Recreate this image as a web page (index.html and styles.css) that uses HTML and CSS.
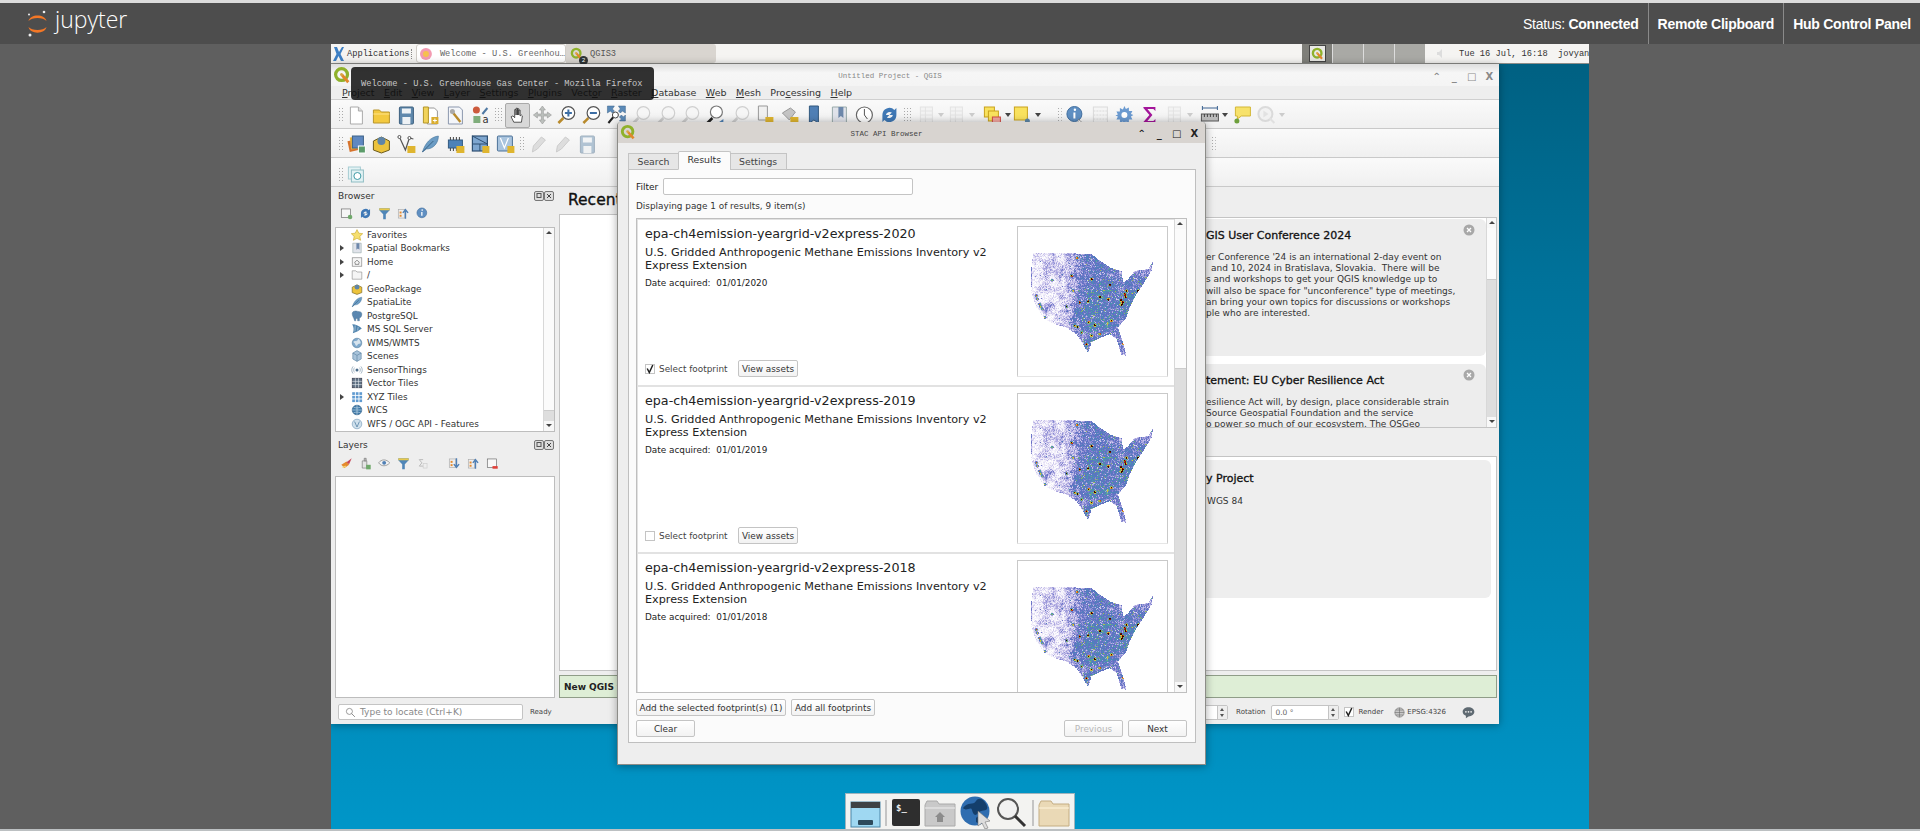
FILE: index.html
```html
<!DOCTYPE html>
<html lang="en">
<head>
  <meta charset="UTF-8" />
  <title>QGIS3 - Jupyter Remote Desktop</title>
  <link rel="stylesheet" href="styles.css">
</head>
<body>

  <!-- shared icons -->
  <svg class="defs" xmlns="http://www.w3.org/2000/svg">
    <symbol id="qgis" viewBox="0 0 20 20"><circle cx="9.5" cy="9.5" r="6.6" fill="none" stroke="#8fb12b" stroke-width="3.6"/><path d="M10 10l7 8" stroke="#e2862b" stroke-width="3.2"/><circle cx="9.5" cy="9.5" r="1.7" fill="#d9a441"/></symbol>
    <symbol id="new" viewBox="0 0 20 20"><path d="M4 2h8l4 4v13H4z" fill="#fff" stroke="#aaa"/><path d="M12 2v4h4" fill="#ddd" stroke="#aaa"/></symbol>
    <symbol id="open" viewBox="0 0 20 20"><path d="M2 5h6l2 2h8v11H2z" fill="#f3c93f" stroke="#b8952c"/><path d="M2 9h16" stroke="#ffe38a"/></symbol>
    <symbol id="save" viewBox="0 0 20 20"><rect x="3" y="2" width="14" height="17" rx="1" fill="#5f88ac" stroke="#3d607f"/><rect x="5.5" y="3.5" width="9" height="5" fill="#eef2f5"/><rect x="6" y="12" width="8" height="7" fill="#eef2f5"/></symbol>
    <symbol id="layout" viewBox="0 0 20 20"><path d="M7 3h7l3 3v13H7z" fill="#fff" stroke="#999"/><path d="M3 2h5v16H3z" fill="#f1d35a" stroke="#b39528"/><rect x="11" y="12" width="7" height="7" fill="#d9ad2e"/><path d="M14.500 13.500v4M12.500 15.500h4" stroke="#fff"/></symbol>
    <symbol id="manager" viewBox="0 0 20 20"><path d="M3 2h11l3 3v14H3z" fill="#f4f6fa" stroke="#8b97ad"/><path d="M7 7l8 10" stroke="#b88a2b" stroke-width="2.400"/><circle cx="7" cy="6.500" r="2.500" fill="#aaa"/></symbol>
    <symbol id="style" viewBox="0 0 20 20"><circle cx="6" cy="5" r="3.500" fill="#cc5a3c"/><rect x="3" y="11" width="7" height="7" fill="#7fad7b"/><path d="M12 9l5-6" stroke="#4f79a3" stroke-width="2"/><text x="12" y="18" font-size="10" font-family="DejaVu Sans" fill="#333">a</text></symbol>
    <symbol id="hand" viewBox="0 0 20 20"><path d="M6 18l-3-6 2-1 2 2V4h1.500v6V2.500H10V10V3h1.500v7V4.500H13V11l1.500-1 1 1-1 7z" fill="#fff" stroke="#333" stroke-width=".9"/></symbol>
    <symbol id="pan" viewBox="0 0 20 20"><path d="M10 1l3 4h-2v4h4V7l4 3-4 3v-2h-4v4h2l-3 4-3-4h2v-4H5v2l-4-3 4-3v2h4V5H7z" fill="#bcc0bd" stroke="#999" stroke-width=".6"/></symbol>
    <symbol id="zin" viewBox="0 0 20 20"><path d="M7 13l-5 5" stroke="#b88a2b" stroke-width="2.500"/><circle cx="12" cy="8" r="6.300" fill="#fff" stroke="#555" stroke-width="1.200"/><path d="M12 4.500v7M8.500 8h7" stroke="#3d6ea5" stroke-width="2"/></symbol>
    <symbol id="zout" viewBox="0 0 20 20"><path d="M7 13l-5 5" stroke="#b88a2b" stroke-width="2.500"/><circle cx="12" cy="8" r="6.300" fill="#fff" stroke="#555" stroke-width="1.200"/><path d="M8.500 8h7" stroke="#3d6ea5" stroke-width="2"/></symbol>
    <symbol id="zfull" viewBox="0 0 20 20"><path d="M1 1h7l-2 3 2 2-2 2-2-2-3 2zM19 1h-7l2 3-2 2 2 2 2-2 3 2zM19 16h-6l2-2-2-2 2-2 2 2 2-2z" fill="#5b8ab8" stroke="#3d6288" stroke-width=".5"/><path d="M7 12l-5 6" stroke="#222" stroke-width="2"/><circle cx="9" cy="10" r="3" fill="#fff" stroke="#444"/></symbol>
    <symbol id="mag" viewBox="0 0 20 20"><path d="M7 13l-5 5" stroke="#ccc" stroke-width="2.500"/><circle cx="12" cy="8" r="6.300" fill="#f6f6f6" stroke="#d0d0d0" stroke-width="1.200"/></symbol>
    <symbol id="magb" viewBox="0 0 20 20"><path d="M7 13l-5 5" stroke="#222" stroke-width="2.500"/><circle cx="11" cy="7" r="6" fill="#fff" stroke="#777" stroke-width="1.200"/><path d="M11 19l7-5v8z" fill="#4d7fb3"/></symbol>
    <symbol id="pagestar" viewBox="0 0 20 20"><path d="M3 1h9v14H3z" fill="#f0f0f0" stroke="#999"/><rect x="10" y="12" width="8" height="7" fill="#dfb52f"/></symbol>
    <symbol id="mapstar" viewBox="0 0 20 20"><path d="M2 8l8-5 5 4-6 8z" fill="#c4c4c4" stroke="#999"/><rect x="10" y="12" width="8" height="7" fill="#dfb52f"/></symbol>
    <symbol id="bookm" viewBox="0 0 20 20"><path d="M5 1h9v17l-4.500-3L5 18z" fill="#4f7fb5" stroke="#33597f"/></symbol>
    <symbol id="bookg" viewBox="0 0 20 20"><path d="M3 2h14v16H3z" fill="#e0e3ea" stroke="#9aa"/><path d="M9 2h5v11l-2.500-2L9 13z" fill="#6d88ab"/></symbol>
    <symbol id="clock" viewBox="0 0 20 20"><circle cx="10" cy="10" r="8" fill="#fff" stroke="#666" stroke-width="1.200"/><path d="M10 4v6l3 4" fill="none" stroke="#555"/></symbol>
    <symbol id="refresh" viewBox="0 0 20 20"><path d="M3 10a7 7 0 0 1 12-5l2-2v7h-7l2.500-2.500A4 4 0 0 0 6.500 10zM17 10a7 7 0 0 1-12 5l-2 2v-7h7l-2.500 2.500A4 4 0 0 0 13.500 10z" fill="#3f78b5"/></symbol>
    <symbol id="yelw" viewBox="0 0 20 20"><rect x="2" y="2" width="10" height="10" fill="#f9e25e" stroke="#c9a21d"/><rect x="6" y="6" width="10" height="10" fill="#f9e25e" stroke="#c9a21d"/><rect x="10" y="12" width="8" height="7" fill="#f2a6a0" stroke="#d24b42"/></symbol>
    <symbol id="yelp" viewBox="0 0 20 20"><rect x="2" y="2" width="13" height="13" fill="#f9e25e" stroke="#c9a21d"/><circle cx="15" cy="16" r="2.500" fill="#5d87a8"/></symbol>
    <symbol id="info" viewBox="0 0 20 20"><circle cx="9" cy="9" r="7.500" fill="#5f8fc2" stroke="#426f9f"/><path d="M9 7.500v6" stroke="#fff" stroke-width="2"/><circle cx="9.500" cy="4.800" r="1.200" fill="#fff"/></symbol>
    <symbol id="abacus" viewBox="0 0 20 20"><rect x="3" y="2" width="14" height="16" fill="#f3f3f3" stroke="#bbb"/><path d="M3 6h14M3 10h14M3 14h14" stroke="#bbb" stroke-dasharray="2 1"/></symbol>
    <symbol id="gear" viewBox="0 0 20 20"><path d="M10 1l1.500 3 3-1.500 0 3.500 3.500 0-1.500 3 2.500 1-2.500 1.500 1.500 3-3.500 0 0 3.500-3-1.500-1.500 2.500-1.500-2.500-3 1.500 0-3.500-3.500 0 1.500-3L1 10.500 3.500 9.500 2 6.500l3.500 0 0-3.500 3 1.500z" fill="#6b9ad0"/><circle cx="10" cy="10" r="3" fill="#fff"/></symbol>
    <symbol id="sigma" viewBox="0 0 20 20"><path d="M4 2h12v4l-2-2H8l5 6-5 6h6l2-2v4H4v-1l6-7-6-7z" fill="#a3159a"/></symbol>
    <symbol id="table" viewBox="0 0 20 20"><rect x="4" y="2" width="12" height="16" fill="#f0f0f0" stroke="#ccc"/><path d="M4 6h12M4 10h12M4 14h12M9 2v16" stroke="#ccc"/></symbol>
    <symbol id="ruler" viewBox="0 0 20 20"><path d="M3 3h15M3 1v4M18 1v4" stroke="#3c6391"/><rect x="2" y="9" width="17" height="7" fill="#bbb" stroke="#555"/><path d="M5 9v3M8 9v3M11 9v3M14 9v3M17 9v3" stroke="#444"/></symbol>
    <symbol id="bubble" viewBox="0 0 20 20"><path d="M3 2h15v9H9l-4 3v-3H3z" fill="#f7e26b" stroke="#d3b737"/><circle cx="4.500" cy="16" r="2.500" fill="#6ea03c"/></symbol>
    <symbol id="cog2" viewBox="0 0 20 20"><circle cx="9" cy="9" r="7" fill="#eee" stroke="#bbb" stroke-width="2"/><path d="M7 5.500l5 3.500-5 3.500z" fill="#ccc"/><path d="M13 13l5 5" stroke="#ccc" stroke-width="2"/></symbol>
    <symbol id="addlayer" viewBox="0 0 20 20"><rect x="2" y="6" width="11" height="11" fill="#d6732d" transform="rotate(-12 7 11)"/><rect x="4" y="3" width="11" height="12" fill="#e8b23c" transform="rotate(-6 9 9)"/><rect x="6" y="2" width="11" height="12" fill="#5f88c0" stroke="#3d6288"/><rect x="12" y="12" width="7" height="7" fill="#5c9c6a" stroke="#fff"/></symbol>
    <symbol id="gpkg" viewBox="0 0 20 20"><path d="M2 7l8-4 8 4v9l-8 3-8-3z" fill="#ecc33c" stroke="#6b5a1b"/><circle cx="10" cy="7" r="4" fill="#5f85a8"/></symbol>
    <symbol id="vertex" viewBox="0 0 20 20"><path d="M3 3l6 13 4-12 4 1" fill="none" stroke="#555" stroke-width="1.200"/><circle cx="3" cy="3" r="1.500" fill="#fff" stroke="#555"/><circle cx="13" cy="4" r="1.500" fill="#fff" stroke="#555"/><rect x="11" y="12" width="8" height="7" fill="#dfb52f"/></symbol>
    <symbol id="feather" viewBox="0 0 20 20"><path d="M2 18C5 9 10 3 18 2c0 7-5 13-12 13z" fill="#6b9cc4" stroke="#44739b" stroke-width=".6"/><path d="M2 18L13 7" stroke="#3b6487"/></symbol>
    <symbol id="chip" viewBox="0 0 20 20"><rect x="3" y="6" width="14" height="8" fill="#4d82b8" stroke="#325a80"/><path d="M5 3v3M8 3v3M11 3v3M14 3v3M5 14v3M8 14v3M11 14v3M14 14v3" stroke="#444"/><rect x="11" y="12" width="8" height="7" fill="#dfb52f"/></symbol>
    <symbol id="gridmesh" viewBox="0 0 20 20"><rect x="2" y="2" width="15" height="15" fill="#7ea6cf" stroke="#2d4f72" stroke-width="1.200"/><path d="M2 10h15M9.500 10v7M2 2l15 8" stroke="#2d4f72"/><rect x="12" y="12" width="7" height="7" fill="#dfb52f"/></symbol>
    <symbol id="vmesh" viewBox="0 0 20 20"><rect x="2" y="2" width="15" height="15" rx="1" fill="#a9c4de" stroke="#4b7197"/><path d="M5 4l4 10 4-10" fill="none" stroke="#fff" stroke-width="1.200"/><rect x="12" y="12" width="7" height="7" fill="#dfb52f"/></symbol>
    <symbol id="pen" viewBox="0 0 20 20"><path d="M4 18l1-6 8-9 4 3-8 9z" fill="#ddd" stroke="#ccc"/></symbol>
    <symbol id="help" viewBox="0 0 20 20"><rect x="3" y="1" width="14" height="18" fill="#5b8ab8" stroke="#3d6288"/><text x="10" y="14" text-anchor="middle" font-size="11" font-family="DejaVu Sans" fill="#fff">?</text></symbol>
    <symbol id="stack" viewBox="0 0 20 20"><rect x="2" y="2" width="12" height="12" fill="#e3f2f4" stroke="#a7cdd3"/><rect x="5" y="5" width="12" height="12" fill="#e3f2f4" stroke="#8fbdc4"/><circle cx="11" cy="11" r="3.500" fill="#fff" stroke="#3e9aa5"/></symbol>
    <symbol id="star" viewBox="0 0 20 20"><path d="M10 1l3 6 6.500.8-4.800 4.500 1.300 6.500L10 15.500 4 18.800l1.300-6.500L.5 7.800 7 7z" fill="#f6df6f" stroke="#c9a829"/></symbol>
    <symbol id="home" viewBox="0 0 20 20"><rect x="2" y="3" width="16" height="14" fill="#f5f5f5" stroke="#777"/><path d="M5.500 11L10 7l4.500 4M7 11v3h6v-3" fill="none" stroke="#555"/></symbol>
    <symbol id="dir" viewBox="0 0 20 20"><path d="M2 3h6l2 2h8v12H2z" fill="#f5f5f5" stroke="#888"/></symbol>
    <symbol id="elephant" viewBox="0 0 20 20"><path d="M2 6c0-4 5-5 8-4s8 0 8 5-3 6-4 6v5h-3v-4H8v4H6c-1-5-4-7-4-12z" fill="#5a87b0" stroke="#335e85" stroke-width=".6"/></symbol>
    <symbol id="fan" viewBox="0 0 20 20"><path d="M2 2c6 0 12 3 16 7-4 3-9 6-15 8 2-5 2-10-1-15z" fill="#4f83ad"/><path d="M7 4l-.5 10M12 6.500l-1 6" stroke="#cfe0ec"/></symbol>
    <symbol id="globe" viewBox="0 0 20 20"><circle cx="10" cy="10" r="8" fill="#7fa9cc" stroke="#577f9f"/><path d="M4 8c3-3 5 1 7-3s4 1 5 4-4 1-5 4-4 1-4-1-3-2-3-4z" fill="#d7e4ee"/></symbol>
    <symbol id="cube" viewBox="0 0 20 20"><path d="M10 1l7 4v10l-7 4-7-4V5z" fill="#a8c3da" stroke="#587f9f"/><path d="M3 5l7 4 7-4M10 9v10" fill="none" stroke="#587f9f"/></symbol>
    <symbol id="sensor" viewBox="0 0 20 20"><circle cx="10" cy="10" r="2.500" fill="#4a6d8c"/><path d="M6 6c-2 2-2 6 0 8M14 6c2 2 2 6 0 8M3.500 4c-3 3-3 9 0 12M16.500 4c3 3 3 9 0 12" fill="none" stroke="#8aa0b4" stroke-width="1.200"/></symbol>
    <symbol id="griddark" viewBox="0 0 20 20"><rect x="2" y="2" width="16" height="16" fill="#5c6f82" stroke="#334"/><path d="M7.300 2v16M12.600 2v16M2 7.300h16M2 12.600h16" stroke="#e8edf2"/></symbol>
    <symbol id="gridblue" viewBox="0 0 20 20"><g fill="#5f9ad0"><rect x="2" y="2" width="4.500" height="4.500"/><rect x="8" y="2" width="4.500" height="4.500"/><rect x="14" y="2" width="4.500" height="4.500"/><rect x="2" y="8" width="4.500" height="4.500"/><rect x="8" y="8" width="4.500" height="4.500"/><rect x="14" y="8" width="4.500" height="4.500"/><rect x="2" y="14" width="4.500" height="4.500"/><rect x="8" y="14" width="4.500" height="4.500"/><rect x="14" y="14" width="4.500" height="4.500"/></g></symbol>
    <symbol id="wcs" viewBox="0 0 20 20"><circle cx="10" cy="10" r="8" fill="#3f79a8" stroke="#28587f"/><path d="M2 10h16M10 2v16M4 5c4 2 8 2 12 0M4 15c4-2 8-2 12 0" fill="none" stroke="#cfe0ec"/></symbol>
    <symbol id="wfs" viewBox="0 0 20 20"><circle cx="10" cy="10" r="8" fill="#cfe0ec" stroke="#6f96b5"/><path d="M6 6l4 9 4-9" fill="none" stroke="#5a85a8" stroke-width="1.400"/></symbol>
    <symbol id="newdb" viewBox="0 0 20 20"><rect x="2" y="3" width="14" height="13" fill="#f6f6f6" stroke="#666"/><circle cx="15.500" cy="15.500" r="3.500" fill="#6fa86a"/></symbol>
    <symbol id="funnel" viewBox="0 0 20 20"><path d="M2 2h16v3l-6 6v8H8v-8L2 5z" fill="#4f86b8"/><path d="M2 2h16v3H2z" fill="#e8c94c"/></symbol>
    <symbol id="collapse" viewBox="0 0 20 20"><rect x="2" y="4" width="10" height="13" fill="#eee" stroke="#aaa"/><path d="M13 18V6M9 9l4-5 4 5" fill="none" stroke="#4f7fb5" stroke-width="2.200"/><rect x="4" y="7" width="3" height="3" fill="#e58a2e"/><rect x="4" y="12" width="3" height="3" fill="#e58a2e"/></symbol>
    <symbol id="expand" viewBox="0 0 20 20"><rect x="2" y="3" width="10" height="13" fill="#eee" stroke="#aaa"/><path d="M13 2v12M9 11l4 5 4-5" fill="none" stroke="#4f7fb5" stroke-width="2.200"/><rect x="4" y="6" width="3" height="3" fill="#e58a2e"/><rect x="4" y="11" width="3" height="3" fill="#e58a2e"/></symbol>
    <symbol id="brush" viewBox="0 0 20 20"><path d="M2 12l8-5 4 5-7 5z" fill="#e58a2e"/><path d="M10 8l8-6-4 9z" fill="#c7485a"/><path d="M4 16l5-2" stroke="#f2d36a" stroke-width="2"/></symbol>
    <symbol id="addgroup" viewBox="0 0 20 20"><path d="M5 6h7v11H5z" fill="#e4e4e4" stroke="#777"/><path d="M8 2h3v4H8z" fill="#bbb" stroke="#777"/><rect x="11" y="12" width="7" height="7" fill="#6fa86a"/></symbol>
    <symbol id="eye" viewBox="0 0 20 20"><path d="M1 9c4-6 12-6 17 0-5 6-13 6-17 0z" fill="#f3f3f3" stroke="#777"/><circle cx="9.500" cy="9" r="3" fill="#4f7fb5"/></symbol>
    <symbol id="fx" viewBox="0 0 20 20"><path d="M11 4H5l4 5-4 5h6" fill="none" stroke="#bbb" stroke-width="1.500"/><rect x="11" y="10" width="6" height="7" fill="none" stroke="#ccc"/></symbol>
    <symbol id="rmlayer" viewBox="0 0 20 20"><rect x="2" y="3" width="14" height="13" fill="#f8f8f8" stroke="#666"/><rect x="10" y="14" width="8" height="4" fill="#e0403a"/></symbol>
    <symbol id="search" viewBox="0 0 20 20"><circle cx="8" cy="8" r="5.500" fill="none" stroke="#777" stroke-width="1.300"/><path d="M12 12l6 6" stroke="#777" stroke-width="1.500"/></symbol>
    <symbol id="crs" viewBox="0 0 20 20"><circle cx="10" cy="10" r="8.500" fill="#c8c8c8" stroke="#666"/><path d="M1.500 10h17M10 1.500v17M3 5.500h14M3 14.500h14" stroke="#666"/></symbol>
    <symbol id="msg" viewBox="0 0 20 20"><path d="M10 2c5 0 9 3 9 7s-4 7-9 7l-4 3v-4c-3-1-5-3-5-6 0-4 4-7 9-7z" fill="#5f6a72"/><circle cx="6" cy="9" r="1.300" fill="#eee"/><circle cx="10" cy="9" r="1.300" fill="#eee"/><circle cx="14" cy="9" r="1.300" fill="#eee"/></symbol>
    <symbol id="tick" viewBox="0 0 10 10"><path d="M2.200 4.500L4.300 8.500 7.800 1" fill="none" stroke="#222" stroke-width="1.500"/></symbol>
    <symbol id="float" viewBox="0 0 10 10"><rect x=".5" y=".5" width="9" height="9" rx="1.500" fill="#ddd" stroke="#777"/><rect x="3" y="2.500" width="4" height="4" fill="none" stroke="#555"/></symbol>
    <symbol id="closex" viewBox="0 0 10 10"><rect x=".5" y=".5" width="9" height="9" rx="1.500" fill="#ddd" stroke="#777"/><path d="M3 3l4 4M7 3L3 7" stroke="#444"/></symbol>
    <symbol id="circlex" viewBox="0 0 12 12"><circle cx="6" cy="6" r="5.500" fill="#a8a8a8"/><path d="M4 4l4 4M8 4L4 8" stroke="#fff" stroke-width="1.300"/></symbol>
  </svg>

  <!-- jupyter bar -->
  <header class="hub-bar">
    <div class="hub-logo">
      <svg width="22" height="27" viewBox="0 0 22 27">
        <path d="M1.500 11C3 3.500 18 3.500 19.500 11 16 7 5 7 1.500 11z" fill="#f37726"/>
        <path d="M1.500 17C3 24.500 18 24.500 19.500 17 16 21 5 21 1.500 17z" fill="#f37726"/>
        <circle cx="17" cy="2" r="1.300" fill="#eee"/><circle cx="2" cy="4.500" r="1" fill="#eee"/><circle cx="3" cy="25" r="1.500" fill="#eee"/>
      </svg>
      <span>jupyter</span>
    </div>
    <nav class="hub-nav">
      <div class="hub-item">Status:&nbsp;<b>Connected</b></div>
      <div class="hub-item"><b>Remote Clipboard</b></div>
      <div class="hub-item"><b>Hub Control Panel</b></div>
    </nav>
  </header>

  <main class="stage">
    <div class="desktop">

      <!-- xfce panel -->
      <div class="panel">
        <div class="apps">
          <svg width="11" height="16" viewBox="0 0 11 16"><path d="M1 1l3 0 2 5 3-5 2 0-3.500 7L11 15H8L5.500 10 3 15H0l3.500-7z" fill="#3d7fc4"/></svg>
          <span>Applications</span>
        </div>
        <div class="panel-sep"></div>
        <div class="task task-on">
          <svg width="14" height="14" viewBox="0 0 14 14"><circle cx="7" cy="7" r="6" fill="#f39bb2"/><circle cx="7" cy="7" r="3" fill="#f5c14e"/></svg>
          <span>Welcome - U.S. Greenhou…</span>
        </div>
        <div class="task task-group">
          <span class="task-ic"><svg width="13" height="13"><use href="#qgis"/></svg><i class="task-badge">2</i></span>
          <span>QGIS3</span>
        </div>
        <div class="pager">
          <div class="pager-cell pager-on"><span class="pager-win"><svg width="13" height="13"><use href="#qgis"/></svg></span></div>
          <div class="pager-cell"></div>
          <div class="pager-cell"></div>
          <div class="pager-cell"></div>
        </div>
        <svg class="vol" width="9" height="9" viewBox="0 0 9 9"><path d="M0 3h2l3-3v9L2 6H0z" fill="#ddd"/></svg>
        <div class="clock">Tue 16 Jul, 16:18&nbsp; jovyan</div>
      </div>

      <div class="tooltip">Welcome - U.S. Greenhouse Gas Center - Mozilla Firefox</div>

      <!-- qgis main window -->
      <section class="win qgis">
        <div class="win-title">
          <svg class="win-logo" width="18" height="18"><use href="#qgis"/></svg>
          <span class="win-name">Untitled Project - QGIS</span>
          <div class="win-btns win-btns-soft"><span>⌃</span><span>_</span><span>□</span><span>X</span></div>
        </div>

        <div class="menu">
          <span><u>P</u>roject</span><span><u>E</u>dit</span><span><u>V</u>iew</span><span><u>L</u>ayer</span><span><u>S</u>ettings</span><span><u>P</u>lugins</span><span>Vect<u>o</u>r</span><span><u>R</u>aster</span><span><u>D</u>atabase</span><span><u>W</u>eb</span><span><u>M</u>esh</span><span>Pro<u>c</u>essing</span><span><u>H</u>elp</span>
        </div>

        <div class="tb">
          <i class="grip"></i>
          <svg class="ic"><use href="#new"/></svg><svg class="ic"><use href="#open"/></svg><svg class="ic"><use href="#save"/></svg><svg class="ic"><use href="#layout"/></svg><svg class="ic"><use href="#manager"/></svg><svg class="ic"><use href="#style"/></svg>
          <i class="grip grip-w"></i>
          <span class="ic-on"><svg class="ic"><use href="#hand"/></svg></span><svg class="ic"><use href="#pan"/></svg><svg class="ic"><use href="#zin"/></svg><svg class="ic"><use href="#zout"/></svg><svg class="ic"><use href="#zfull"/></svg>
          <svg class="ic"><use href="#mag"/></svg><svg class="ic"><use href="#mag"/></svg><svg class="ic"><use href="#mag"/></svg><svg class="ic"><use href="#magb"/></svg><svg class="ic"><use href="#mag"/></svg><svg class="ic"><use href="#pagestar"/></svg><svg class="ic"><use href="#mapstar"/></svg><svg class="ic"><use href="#bookm"/></svg><svg class="ic"><use href="#bookg"/></svg><svg class="ic"><use href="#clock"/></svg><svg class="ic"><use href="#refresh"/></svg>
          <i class="grip grip-w"></i>
          <svg class="ic ic-off"><use href="#table"/></svg><i class="dd dd-off dd-6"></i><svg class="ic ic-off"><use href="#table"/></svg><i class="dd dd-off dd-11"></i>
          <svg class="ic"><use href="#yelw"/></svg><i class="dd dd-5"></i><svg class="ic"><use href="#yelp"/></svg><i class="dd dd-11"></i><i class="grip grip-n"></i>
          <span class="ic-wrap"><svg class="ic"><use href="#info"/></svg><svg class="cursor" width="8" height="10" viewBox="0 0 8 10"><path d="M0 0v8l2-2 2 4 2-1-2-3h3z" fill="#fff" stroke="#666" stroke-width=".6"/></svg></span><svg class="ic ic-off"><use href="#abacus"/></svg><svg class="ic"><use href="#gear"/></svg><svg class="ic"><use href="#sigma"/></svg><svg class="ic ic-off"><use href="#table"/></svg><i class="dd dd-off dd-10"></i>
          <svg class="ic"><use href="#ruler"/></svg><i class="dd dd-8"></i><svg class="ic"><use href="#bubble"/></svg><svg class="ic ic-off"><use href="#cog2"/></svg><i class="dd dd-off dd-8"></i>
        </div>

        <div class="tb">
          <i class="grip"></i>
          <svg class="ic"><use href="#addlayer"/></svg><svg class="ic"><use href="#gpkg"/></svg><svg class="ic"><use href="#vertex"/></svg><svg class="ic"><use href="#feather"/></svg><svg class="ic"><use href="#chip"/></svg><svg class="ic"><use href="#gridmesh"/></svg><svg class="ic"><use href="#vmesh"/></svg>
          <i class="grip grip-s"></i>
          <svg class="ic"><use href="#pen"/></svg><svg class="ic"><use href="#pen"/></svg><svg class="ic ic-off"><use href="#save"/></svg>
          <svg class="ic ic-help"><use href="#help"/></svg>
          <i class="grip grip-n"></i>
        </div>

        <div class="tb tb-last">
          <i class="grip"></i>
          <svg class="ic"><use href="#stack"/></svg>
        </div>

        <div class="main">
          <aside class="docks">
            <div class="dock-head"><span>Browser</span><svg width="10" height="10"><use href="#float"/></svg><svg width="10" height="10"><use href="#closex"/></svg></div>
            <div class="dock-tools">
              <svg><use href="#newdb"/></svg><svg><use href="#refresh"/></svg><svg><use href="#funnel"/></svg><svg><use href="#collapse"/></svg><svg><use href="#info"/></svg>
            </div>
            <div class="tree">
              <ul class="tree-list">
                <li><i></i><svg><use href="#star"/></svg>Favorites</li>
                <li><i class="arrow"></i><svg><use href="#bookg"/></svg>Spatial Bookmarks</li>
                <li><i class="arrow"></i><svg><use href="#home"/></svg>Home</li>
                <li><i class="arrow"></i><svg><use href="#dir"/></svg>/</li>
                <li><i></i><svg><use href="#gpkg"/></svg>GeoPackage</li>
                <li><i></i><svg><use href="#feather"/></svg>SpatiaLite</li>
                <li><i></i><svg><use href="#elephant"/></svg>PostgreSQL</li>
                <li><i></i><svg><use href="#fan"/></svg>MS SQL Server</li>
                <li><i></i><svg><use href="#globe"/></svg>WMS/WMTS</li>
                <li><i></i><svg><use href="#cube"/></svg>Scenes</li>
                <li><i></i><svg><use href="#sensor"/></svg>SensorThings</li>
                <li><i></i><svg><use href="#griddark"/></svg>Vector Tiles</li>
                <li><i class="arrow"></i><svg><use href="#gridblue"/></svg>XYZ Tiles</li>
                <li><i></i><svg><use href="#wcs"/></svg>WCS</li>
                <li><i></i><svg><use href="#wfs"/></svg>WFS / OGC API - Features</li>
                <li><i></i><svg><use href="#cube"/></svg></li>
              </ul>
              <div class="sbar">
                <i class="sbar-up"></i><div class="sbar-thumb"></div><div class="sbar-rest"></div><i class="sbar-down"></i>
              </div>
            </div>
            <div class="splitter"></div>
            <div class="dock-head"><span>Layers</span><svg width="10" height="10"><use href="#float"/></svg><svg width="10" height="10"><use href="#closex"/></svg></div>
            <div class="dock-tools dock-tools-l">
              <svg><use href="#brush"/></svg><svg><use href="#addgroup"/></svg><svg><use href="#eye"/></svg><svg><use href="#funnel"/></svg><svg><use href="#fx"/></svg><i class="gapx"></i><svg><use href="#expand"/></svg><svg><use href="#collapse"/></svg><svg><use href="#rmlayer"/></svg>
            </div>
            <div class="layers"></div>
          </aside>

          <div class="center">
            <div class="welcome">
              <div class="recent">
                <h1>Recent Projects</h1>
                <div class="recent-list"></div>
              </div>
              <div class="side">
                <div class="news">
                  <div class="news-list">
                    <article class="news-card news-card-a">
                      <svg class="news-x" width="12" height="12"><use href="#circlex"/></svg>
                      <h3>GIS User Conference 2024</h3>
                      <p>er Conference '24 is an international 2-day event on</p>
                      <p class="in-1"> and 10, 2024 in Bratislava, Slovakia.&nbsp; There will be</p>
                      <p>s and workshops to get your QGIS knowledge up to</p>
                      <p>will also be space for "unconference" type of meetings,</p>
                      <p>an bring your own topics for discussions or workshops</p>
                      <p>ple who are interested.</p>
                    </article>
                    <article class="news-card">
                      <svg class="news-x" width="12" height="12"><use href="#circlex"/></svg>
                      <h3>tement: EU Cyber Resilience Act</h3>
                      <p>esilience Act will, by design, place considerable strain</p>
                      <p>Source Geospatial Foundation and the service</p>
                      <p>o power so much of our ecosystem. The OSGeo</p>
                    </article>
                  </div>
                  <div class="sbar news-sbar">
                    <i class="sbar-up"></i><div class="sbar-thumb news-thumb"></div><div class="sbar-rest"></div><i class="sbar-down"></i>
                  </div>
                </div>
                <div class="templates">
                  <div class="template-card">
                    <h3>y Project</h3>
                    <p>WGS 84</p>
                  </div>
                </div>
              </div>
            </div>
            <div class="banner"><b>New QGIS version available</b></div>
          </div>
        </div>

        <div class="status">
          <div class="locator"><svg width="11" height="11"><use href="#search"/></svg><span>Type to locate (Ctrl+K)</span></div>
          <span class="ready">Ready</span>
          <div class="status-right">
            <div class="spin spin-scale"><b></b><i></i></div>
            <span class="st-label st-rot">Rotation</span>
            <div class="spin spin-rot"><span>0.0 °</span><i></i></div>
            <span class="check"><svg width="10" height="10"><use href="#tick"/></svg></span>
            <span class="st-label st-render">Render</span>
            <svg class="st-crs" width="11" height="11"><use href="#crs"/></svg>
            <span class="st-label st-epsg">EPSG:4326</span>
            <svg class="st-msg" width="13" height="13"><use href="#msg"/></svg>
          </div>
        </div>
      </section>

      <!-- stac plugin dialog -->
      <section class="win stac">
        <div class="win-title stac-title">
          <svg class="win-logo" width="16" height="16"><use href="#qgis"/></svg>
          <span class="win-name">STAC API Browser</span>
          <div class="win-btns"><span>⌃</span><span>_</span><span>□</span><span>X</span></div>
        </div>
        <div class="stac-body">
          <div class="tabs">
            <div class="tab">Search</div>
            <div class="tab tab-on">Results</div>
            <div class="tab">Settings</div>
          </div>
          <div class="pane">
            <div class="filter"><label>Filter</label><div class="field"></div></div>
            <div class="count">Displaying page 1 of results, 9 item(s)</div>
            <div class="results">
              <div class="result-list">
                <div class="card">
                  <div class="card-text">
                    <h4>epa-ch4emission-yeargrid-v2express-2020</h4>
                    <p class="card-desc">U.S. Gridded Anthropogenic Methane Emissions Inventory v2 Express Extension</p>
                    <p class="card-date">Date acquired:&nbsp; 01/01/2020</p>
                    <div class="card-foot">
                      <span class="check"><svg width="10" height="10"><use href="#tick"/></svg></span>
                      <span class="foot-label">Select footprint</span>
                      <button class="btn btn-assets">View assets</button>
                    </div>
                  </div>
                  <div class="thumb"><canvas class="map" width="149" height="149"></canvas></div>
                </div>
                <div class="card">
                  <div class="card-text">
                    <h4>epa-ch4emission-yeargrid-v2express-2019</h4>
                    <p class="card-desc">U.S. Gridded Anthropogenic Methane Emissions Inventory v2 Express Extension</p>
                    <p class="card-date">Date acquired:&nbsp; 01/01/2019</p>
                    <div class="card-foot">
                      <span class="check"></span>
                      <span class="foot-label">Select footprint</span>
                      <button class="btn btn-assets">View assets</button>
                    </div>
                  </div>
                  <div class="thumb"><canvas class="map" width="149" height="149"></canvas></div>
                </div>
                <div class="card">
                  <div class="card-text">
                    <h4>epa-ch4emission-yeargrid-v2express-2018</h4>
                    <p class="card-desc">U.S. Gridded Anthropogenic Methane Emissions Inventory v2 Express Extension</p>
                    <p class="card-date">Date acquired:&nbsp; 01/01/2018</p>
                  </div>
                  <div class="thumb"><canvas class="map" width="149" height="149"></canvas></div>
                </div>
              </div>
              <div class="sbar results-sbar">
                <i class="sbar-up"></i><div class="sbar-thumb results-thumb"></div><div class="sbar-rest"></div><i class="sbar-down"></i>
              </div>
            </div>
            <div class="btn-row">
              <button class="btn btn-sel">Add the selected footprint(s) (1)</button>
              <button class="btn btn-all">Add all footprints</button>
            </div>
            <div class="btn-row">
              <button class="btn btn-wide">Clear</button>
              <button class="btn btn-wide btn-off btn-prev">Previous</button>
              <button class="btn btn-wide">Next</button>
            </div>
          </div>
        </div>
      </section>

      <!-- dock -->
      <div class="dock">
        <svg width="31" height="30" viewBox="0 0 31 30"><rect x="1" y="4" width="29" height="25" fill="#9fd8f2" stroke="#4a86a8"/><rect x="1" y="4" width="29" height="6" fill="#3f4245"/><rect x="8" y="22" width="15" height="5" rx="1" fill="#2d4a5c"/></svg>
        <i class="dock-sep"></i>
        <svg width="28" height="27" viewBox="0 0 28 27"><rect width="28" height="27" rx="2" fill="#2e2e2e"/><text x="4" y="12" font-family="DejaVu Sans Mono" font-size="9" font-weight="bold" fill="#eee">$_</text></svg>
        <svg width="32" height="28" viewBox="0 0 32 28"><path d="M1 6l2-4h10l2 3h16v22H1z" fill="#c9c9c9" stroke="#aaa"/><path d="M1 9h30" stroke="#eee"/><path d="M11 18l5-5 5 5h-2v5h-6v-5z" fill="#8c8c8c"/></svg>
        <svg width="32" height="33" viewBox="0 0 32 33"><circle cx="15" cy="15" r="14.500" fill="#2f6db0"/><path d="M3 12c5-7 10-2 13-7s9-1 11 5-6 3-9 7-5 1-6-3-6 2-9-2zM16 22c3-3 6-1 6 2s-4 4-6 2z" fill="#143e6b"/><path d="M18 15v15l4-3 3 6 3-1-3-6 5-1z" fill="#ddd" stroke="#777" stroke-width=".6"/></svg>
        <svg width="31" height="31" viewBox="0 0 31 31"><circle cx="12" cy="12" r="10" fill="#f1f1f1" stroke="#555" stroke-width="2"/><path d="M19 19l10 10" stroke="#333" stroke-width="3"/></svg>
        <i class="dock-sep"></i>
        <svg width="32" height="28" viewBox="0 0 32 28"><path d="M1 6l2-4h10l2 3h16v22H1z" fill="#ead9b6" stroke="#c4ad82"/><path d="M1 9h30" stroke="#fff5dc"/></svg>
      </div>
    </div>
  </main>

  <script src="map.js"></script>
</body>
</html>
```

FILE: styles.css
```css
* {
  box-sizing: border-box;
}

html, body {
  height: 100%;
}

body {
  margin: 0;
  display: flex;
  flex-direction: column;
  overflow: hidden;
  background-color: #5f5f5f;
  border-top: 3px solid #dcdcdc;
  border-bottom: 2px solid #bcc0c2;
  font-family: "DejaVu Sans", sans-serif;
  font-size: 9px;
  color: #222;
}

h1, h3, h4, p, ul {
  margin: 0;
  padding: 0;
}

.defs {
  display: none;
}

/* jupyter bar */
.hub-bar {
  height: 41px;
  flex: none;
  display: flex;
  align-items: center;
  justify-content: space-between;
  background-color: #4d4d4d;
  font-family: "Liberation Sans", Arial, sans-serif;
  color: #fff;
}

.hub-logo {
  display: flex;
  align-items: center;
  padding-left: 27px;
  gap: 6px;
  font-family: "Open Sans", sans-serif;
  font-weight: 300;
  font-size: 23px;
}

.hub-logo span {
  position: relative;
  top: -5px;
}

.hub-nav {
  display: flex;
  height: 100%;
  font-size: 14px;
  letter-spacing: -.25px;
}

.hub-item {
  display: flex;
  align-items: center;
  padding: 0 9px;
  border-left: 1px solid #8a8a8a;
  white-space: pre;
}

.hub-item:first-child {
  border-left: none;
}

.stage {
  flex: 1;
  display: flex;
  padding-left: 331px;
}

/* desktop */
.desktop {
  position: relative;
  width: 1258px;
  height: 785px;
  overflow: hidden;
  background: linear-gradient(#005f80, #00729a 30%, #0088b6 75%, #0096c8);
  filter: blur(.3px);
}

.panel {
  height: 20px;
  display: flex;
  align-items: center;
  background-color: #f5f4f2;
  border-bottom: 1px solid #8c8c88;
  font-family: "Liberation Mono", monospace;
  font-size: 8.7px;
  color: #333;
}

.apps {
  width: 80px;
  flex: none;
  display: flex;
  align-items: center;
  gap: 3px;
  padding-left: 2px;
}

.panel-sep {
  width: 5px;
  flex: none;
  height: 10px;
  border-left: 1px dotted #888;
}

.task {
  width: 150px;
  height: 19px;
  flex: none;
  display: flex;
  align-items: center;
  gap: 7px;
  padding-left: 2px;
  color: #666;
  white-space: nowrap;
}

.task-on {
  background-color: #fff;
  border: 1px solid #d0ccc6;
  border-radius: 3px;
}

.task-group {
  background-color: #d9d5d0;
  border-radius: 0 3px 3px 0;
  color: #555;
}

.task-ic {
  position: relative;
  display: flex;
  margin-left: 2px;
}

.task-badge {
  position: absolute;
  right: -5px;
  bottom: -5px;
  width: 9px;
  height: 9px;
  border-radius: 50%;
  background-color: #2e3436;
  color: #fff;
  font-style: normal;
  font-size: 6px;
  line-height: 9px;
  text-align: center;
}

.pager {
  display: flex;
  flex: none;
  height: 19px;
  margin-left: 586px;
  background-color: #a9a9a5;
}

.pager-cell {
  width: 31px;
  border-left: 1px solid #ddd;
  display: flex;
  align-items: center;
  justify-content: center;
}

.pager-cell:first-child {
  width: 30px;
  border-left: none;
}

.pager-on {
  background-color: #7f7f7a;
}

.pager-win {
  display: flex;
  align-items: center;
  justify-content: center;
  width: 17px;
  height: 17px;
  background-color: #e8e8e4;
  border: 1px solid #444;
}

.vol {
  flex: none;
  margin-left: 12px;
}

.clock {
  margin-left: 13px;
  white-space: nowrap;
}

.tooltip {
  position: absolute;
  left: 20px;
  top: 23px;
  z-index: 5;
  width: 303px;
  height: 33px;
  padding: 12px 0 0 10px;
  border-radius: 4px;
  background-color: rgba(14, 14, 14, .85);
  font-family: "Liberation Mono", monospace;
  font-size: 8.7px;
  color: #c8c8c8;
  white-space: nowrap;
}

/* windows */
.win {
  position: absolute;
  display: flex;
  flex-direction: column;
  background-color: #eeeeee;
  box-shadow: 0 1px 8px rgba(0, 0, 0, .35);
}

.qgis {
  left: 0;
  top: 20px;
  width: 1168px;
  height: 660px;
  z-index: 1;
}

.stac {
  left: 286px;
  top: 78px;
  width: 589px;
  height: 643px;
  z-index: 3;
  border: 1px solid #8c8c88;
  border-top: none;
  border-radius: 4px 4px 0 0;
}

.win-title {
  height: 22px;
  flex: none;
  position: relative;
  display: flex;
  align-items: center;
  justify-content: center;
  padding: 2px 50px 0 0;
  background: linear-gradient(#dedede, #f6f6f6 40%, #f4f4f4);
  font-family: "Liberation Mono", monospace;
  font-size: 7.5px;
  color: #888;
}

.stac-title {
  height: 21px;
  background: #d8d4d0;
  border-radius: 4px 4px 0 0;
  color: #444;
}

.win-logo {
  position: absolute;
  left: 2px;
  top: 2px;
}

.win-btns {
  position: absolute;
  right: 2px;
  top: 2px;
  bottom: 0;
  display: flex;
  align-items: center;
  font-family: "DejaVu Sans", sans-serif;
  font-size: 10px;
  font-weight: bold;
  color: #222;
}

.win-btns span {
  width: 17.5px;
  text-align: center;
}

.win-btns-soft {
  right: 1px;
  color: #8a8a8a;
}

.menu {
  height: 14px;
  flex: none;
  display: flex;
  align-items: center;
  padding-left: 11px;
  background-color: #eeeeee;
  border-bottom: 1px solid #cfcfcf;
  font-size: 9.5px;
  color: #333;
}

.menu span {
  padding-right: 9.4px;
}

.tb {
  height: 29px;
  flex: none;
  display: flex;
  align-items: center;
  padding: 2px 0 0 6px;
  background: linear-gradient(#fafafa, #f0f0f0);
  border-bottom: 1px solid #c9c9c9;
}

.tb-last {
  padding-top: 6px;
}

.ic {
  width: 24.8px;
  height: 20px;
  flex: none;
  padding: 0 2.400px;
}

.ic-on {
  display: flex;
  height: 25px;
  align-items: center;
  background-color: #d8d8d8;
  border: 1px solid #aaa;
  border-radius: 2px;
  width: 24.8px;
}

.ic-on .ic {
  width: 22.8px;
}

.ic-off {
  opacity: .45;
}

.ic-wrap {
  position: relative;
  display: flex;
}

.cursor {
  position: absolute;
  right: 2px;
  bottom: -4px;
}

.ic-help {
  margin-left: 575px;
}

.grip {
  width: 7px;
  height: 16px;
  flex: none;
  background-image: radial-gradient(#aaa 40%, transparent 45%);
  background-size: 3px 3px;
  background-position: 1px 0;
  clip-path: inset(0 1px 0 1px);
}

.grip-w {
  width: 12px;
}

.grip-s {
  width: 8px;
}

.grip-n {
  margin-left: 10px;
}

.dd {
  height: 4px;
  flex: none;
  position: relative;
}

.dd::after {
  content: "";
  position: absolute;
  left: 0;
  top: 0;
  border: 3px solid transparent;
  border-top: 4px solid #444;
  border-bottom: none;
}

.dd-off::after {
  border-top-color: #ccc;
}

.dd-5 { width: 5px; }
.dd-6 { width: 6px; }
.dd-8 { width: 8px; }
.dd-10 { width: 10px; }
.dd-11 { width: 11px; }

.main {
  flex: 1;
  min-height: 0;
  display: flex;
}

/* left docks */
.docks {
  width: 228px;
  flex: none;
  padding-left: 4px;
  display: flex;
  flex-direction: column;
}

.dock-head {
  height: 18px;
  display: flex;
  align-items: center;
  padding: 0 5px 0 3px;
  font-size: 9px;
  color: #333;
}

.dock-head span {
  flex: 1;
}

.dock-head svg {
  flex: none;
}

.dock-tools {
  height: 17px;
  display: flex;
  align-items: center;
  gap: 6px;
  padding-left: 5px;
  margin-bottom: 5px;
}

.dock-tools svg {
  width: 13px;
  height: 13px;
  flex: none;
}

.dock-tools-l {
  height: 18px;
  margin-bottom: 4px;
}

.gapx {
  width: 7px;
}

.tree {
  height: 205px;
  display: flex;
  width: 220px;
  overflow: hidden;
  background-color: #fff;
  border: 1px solid #bdbdbd;
}

.tree-list {
  flex: 1;
  list-style: none;
}

.tree-list li {
  height: 13.5px;
  display: flex;
  align-items: center;
  font-size: 8.9px;
  white-space: nowrap;
  color: #333;
}

.tree-list li i {
  width: 15px;
  flex: none;
  display: block;
  height: 6px;
  position: relative;
}

.arrow::after {
  content: "";
  position: absolute;
  left: 4px;
  top: 0;
  border: 3px solid transparent;
  border-left: 4px solid #444;
  border-right: none;
}

.tree-list svg {
  width: 12px;
  height: 12px;
  margin-right: 4px;
  flex: none;
}

.sbar {
  width: 11px;
  flex: none;
  display: flex;
  flex-direction: column;
  background-color: #f8f8f8;
  border-left: 1px solid #d8d8d8;
}

.sbar-up, .sbar-down {
  height: 10px;
  flex: none;
  position: relative;
  display: block;
}

.sbar-up::after, .sbar-down::after {
  content: "";
  position: absolute;
  left: 2px;
  top: 3px;
  border: 3px solid transparent;
  border-top: none;
  border-bottom: 3px solid #444;
}

.sbar-down::after {
  border-top: 3px solid #444;
  border-bottom: none;
}

.sbar-thumb {
  height: 173px;
  background-color: #fbfbfb;
  border-bottom: 1px solid #ccc;
}

.sbar-rest {
  flex: 1;
  background-color: #dedede;
}

.splitter {
  height: 4px;
  flex: none;
}

.layers {
  width: 220px;
  height: 222px;
  background-color: #fff;
  border: 1px solid #bdbdbd;
}

/* welcome page */
.center {
  flex: 1;
  min-width: 0;
  display: flex;
  flex-direction: column;
  padding-right: 2px;
}

.welcome {
  flex: 1;
  min-height: 0;
  display: flex;
}

.recent {
  width: 640px;
  flex: none;
  display: flex;
  flex-direction: column;
}

.recent h1 {
  height: 27px;
  line-height: 26px;
  padding-left: 9px;
  font-size: 15.5px;
  font-weight: normal;
  -webkit-text-stroke: .35px #111;
  color: #111;
  white-space: nowrap;
}

.recent-list {
  flex: 1;
  background-color: #fff;
  border: 1px solid #c4c4c4;
}

.side {
  flex: 1;
  min-width: 0;
  padding-top: 30px;
  display: flex;
  flex-direction: column;
}

.news {
  height: 211px;
  display: flex;
  background-color: #fff;
  border: 1px solid #c4c4c4;
  border-left: none;
  overflow: hidden;
}

.news-list {
  flex: 1;
  min-width: 0;
  padding-top: 1px;
}

.news-card {
  position: relative;
  height: 137px;
  margin-bottom: 8px;
  padding: 9px 0 0 7px;
  background-color: #ededed;
  border-radius: 0 6px 6px 0;
}

.news-x {
  position: absolute;
  right: 11px;
  top: 5px;
}

.news-card h3, .template-card h3 {
  height: 15px;
  line-height: 15px;
  font-size: 11px;
  font-weight: normal;
  -webkit-text-stroke: .3px #111;
  color: #111;
  white-space: nowrap;
}

.news-card h3 {
  margin-bottom: 9px;
}

.news-card p, .template-card p {
  line-height: 11.2px;
  font-size: 9px;
  color: #333;
  white-space: nowrap;
}

.in-1 {
  padding-left: 5px;
}

.news-sbar {
  width: 10px;
}

.news-thumb {
  height: 52px;
}

.templates {
  margin-top: 28px;
  flex: 1;
  padding: 3px 5px 0 0;
  background-color: #fff;
  border: 1px solid #c4c4c4;
  border-left: none;
}

.template-card {
  height: 138px;
  padding: 11px 0 0 7px;
  background-color: #eeeeee;
  border-radius: 0 6px 6px 0;
}

.template-card h3 {
  margin-bottom: 10px;
}

.template-card p {
  padding-left: 1px;
}

.banner {
  height: 23px;
  margin-top: 4px;
  margin-bottom: 2px;
  flex: none;
  display: flex;
  align-items: center;
  padding-left: 4px;
  background-color: #deeed6;
  border: 1px solid #8f9d88;
  font-size: 9px;
  white-space: nowrap;
}

/* status bar */
.status {
  height: 24px;
  flex: none;
  display: flex;
  align-items: center;
  padding-left: 7px;
  font-size: 7px;
  color: #444;
}

.locator {
  width: 185px;
  height: 16px;
  flex: none;
  display: flex;
  align-items: center;
  gap: 4px;
  padding-left: 6px;
  background-color: #fff;
  border: 1px solid #c4c4c4;
  border-radius: 2px;
  font-size: 9px;
  color: #888;
}

.ready {
  margin-left: 7px;
}

.status-right {
  margin-left: auto;
  display: flex;
  align-items: center;
  padding-right: 24px;
}

.spin {
  height: 15px;
  display: flex;
  align-items: center;
  background-color: #fff;
  border: 1px solid #c4c4c4;
  border-radius: 2px;
  position: relative;
  padding-left: 3px;
}

.spin i {
  position: absolute;
  right: 0;
  top: 0;
  bottom: 0;
  width: 10px;
  background-color: #eeeeee;
  border-left: 1px solid #c4c4c4;
}

.spin i::before {
  content: "";
  position: absolute;
  left: 2px;
  top: 2px;
  border: 2.500px solid transparent;
  border-top: none;
  border-bottom: 3px solid #555;
}

.spin i::after {
  content: "";
  position: absolute;
  left: 2px;
  bottom: 2px;
  border: 2.500px solid transparent;
  border-bottom: none;
  border-top: 3px solid #555;
}

.spin-scale {
  width: 60px;
}

.spin-rot {
  width: 68px;
  margin-right: 5px;
  font-size: 7.5px;
  color: #666;
}

.st-label {
  white-space: nowrap;
}

.st-rot {
  margin: 0 6px 0 8px;
}

.st-render {
  margin: 0 11px 0 4px;
}

.st-epsg {
  margin-left: 2px;
}

.st-msg {
  margin-left: 16px;
}

/* stac dialog */
.stac-body {
  flex: 1;
  min-height: 0;
  padding: 9px 9px 21px 10px;
  display: flex;
  flex-direction: column;
  background-color: #eeeeee;
}

.tabs {
  height: 18px;
  flex: none;
  display: flex;
  align-items: flex-end;
  position: relative;
  z-index: 1;
  margin-bottom: -1px;
}

.tab {
  height: 17px;
  line-height: 16px;
  padding: 0 8.5px;
  background-color: #e6e6e6;
  border: 1px solid #c4c4c4;
  font-size: 9.3px;
  color: #444;
}

.tab-on {
  height: 19px;
  margin: 0 -1px;
  background-color: #fbfbfb;
  border-bottom-color: #fbfbfb;
  border-radius: 2px 2px 0 0;
  color: #333;
}

.pane {
  flex: 1;
  min-height: 0;
  padding: 8px 8px 7px 7px;
  display: flex;
  flex-direction: column;
  background-color: #fbfbfb;
  border: 1px solid #bfbfbf;
}

.filter {
  display: flex;
  align-items: center;
  height: 17px;
  flex: none;
  font-size: 9px;
}

.filter label {
  width: 27px;
}

.field {
  width: 250px;
  height: 17px;
  background-color: #fff;
  border: 1px solid #c4c4c4;
  border-radius: 2px;
}

.count {
  height: 23px;
  flex: none;
  line-height: 23px;
  font-size: 8.9px;
  color: #333;
}

.results {
  height: 475px;
  flex: none;
  display: flex;
  overflow: hidden;
  background-color: #e2e2e2;
  border: 1px solid #bfbfbf;
}

.result-list {
  flex: 1;
  min-width: 0;
  padding: 1px 0 0 1px;
}

.card {
  height: 165px;
  margin-bottom: 2px;
  display: flex;
  padding: 6px 6px 7px 7px;
  background-color: #fff;
}

.card-text {
  flex: 1;
  min-width: 0;
  display: flex;
  flex-direction: column;
}

.card h4 {
  height: 15px;
  line-height: 15px;
  font-size: 12.700px;
  font-weight: normal;
  color: #222;
  white-space: nowrap;
}

.card-desc {
  width: 350px;
  margin-top: 6px;
  line-height: 12.500px;
  font-size: 11.200px;
  color: #222;
}

.card-date {
  margin-top: 5px;
  line-height: 13px;
  font-size: 8.900px;
  color: #222;
}

.card-foot {
  margin-top: auto;
  margin-bottom: 1px;
  display: flex;
  align-items: center;
  font-size: 8.900px;
  color: #444;
}

.check {
  width: 10px;
  height: 10px;
  flex: none;
  display: block;
  background-color: #fff;
  border: 1px solid #c4c4c4;
}

.check svg {
  display: block;
  margin: -1px;
}

.foot-label {
  margin-left: 4px;
  width: 79px;
}

.btn {
  height: 17px;
  padding: 0;
  background: linear-gradient(#fff, #f2f2f2);
  border: 1px solid #c4c4c4;
  border-radius: 2px;
  font-family: "DejaVu Sans", sans-serif;
  font-size: 8.900px;
  color: #333;
  white-space: nowrap;
}

.btn-assets {
  width: 60px;
}

.thumb {
  width: 151px;
  flex: none;
  height: 151px;
  background-color: #fff;
  border: 1px solid #c9c9c9;
  border-bottom: 2px solid #e6e6e6;
}

.map {
  display: block;
}

.results-sbar {
  width: 12px;
}

.results-thumb {
  height: 140px;
}

.btn-row {
  height: 17px;
  flex: none;
  margin-top: 4px;
  display: flex;
  gap: 5px;
}

.results + .btn-row {
  margin-top: 6px;
}

.btn-sel {
  width: 150px;
}

.btn-all {
  width: 84px;
}

.btn-wide {
  width: 59px;
}

.btn-off {
  color: #b8b8b8;
}

.btn-prev {
  margin-left: auto;
}

/* dock */
.dock {
  position: absolute;
  left: 514px;
  bottom: 0;
  z-index: 2;
  width: 230px;
  height: 36px;
  display: flex;
  align-items: center;
  justify-content: space-between;
  padding: 2px 4px 0;
  background-color: #f3f3f1;
  border: 1px solid #9fb4bd;
  border-bottom: none;
}

.dock-sep {
  width: 2px;
  height: 26px;
  background-color: #c4c4c4;
}
```

FILE: map.js
```js
// methane thumbnail, drawn once and copied to each result card
const outline = [
  [65,78],[150,76],[240,80],[262,97],[300,122],[330,130],[335,165],[350,155],[370,130],[410,125],[425,100],
  [420,130],[395,170],[375,200],[355,240],[345,270],[320,300],[335,345],[345,385],[330,382],[315,335],[295,320],
  [270,330],[240,345],[230,378],[215,350],[195,320],[165,300],[130,290],[100,275],[75,240],[58,190],[60,120]
].map(p => [(p[0] - 21) / 3, p[1] / 3]);

const hot = [
  [75,205],[85,230],[92,245],[100,270],[180,145],[122,158],[240,155],[185,190],[165,237],[295,172],[340,200],
  [335,225],[345,190],[205,225],[232,285],[250,293],[198,298],[210,315],[265,320],[240,325],[225,350],[300,280],
  [355,260],[380,190],[335,348],[290,215],[265,208],[230,222],[197,92],[330,232],[190,295],[342,208],[328,218],
  [78,215],[88,238]
].map(p => [(p[0] - 21) / 3, p[1] / 3]);

const ramp = [
  [0, 255,255,255], [.12, 236,232,248], [.26, 178,172,226], [.4, 100,110,196], [.5, 78,128,188],
  [.6, 78,168,160], [.7, 142,188,90], [.8, 228,194,60], [.87, 232,122,30], [.94, 192,26,16], [1, 58,0,0]
];

let seed = 4211;
function rnd() {
  seed = (seed * 16807) % 2147483647;
  return seed / 2147483647;
}

const table = [];
for (let i = 0; i < 3600; i++) table.push(rnd());

// bilinear value noise, s is the blotch size in pixels
function noise(x, y, s) {
  const fx = x / s, fy = y / s, ix = Math.floor(fx), iy = Math.floor(fy), kx = fx - ix, ky = fy - iy;
  const at = (a, b) => table[(a * 59 + b) % 3600];
  return (at(ix, iy) * (1 - kx) + at(ix + 1, iy) * kx) * (1 - ky) + (at(ix, iy + 1) * (1 - kx) + at(ix + 1, iy + 1) * kx) * ky;
}

function inside(x, y) {
  let hit = false;
  for (let i = 0, j = outline.length - 1; i < outline.length; j = i++) {
    const a = outline[i], b = outline[j];
    if ((a[1] > y) !== (b[1] > y) && x < (b[0] - a[0]) * (y - a[1]) / (b[1] - a[1]) + a[0]) hit = !hit;
  }
  return hit;
}

function colour(t) {
  for (let i = 1; i < ramp.length; i++) {
    if (t <= ramp[i][0]) {
      const a = ramp[i - 1], b = ramp[i], k = (t - a[0]) / (b[0] - a[0]);
      return [1, 2, 3].map(n => a[n] + (b[n] - a[n]) * k);
    }
  }
  return [58, 0, 0];
}

const source = document.createElement("canvas");
source.width = source.height = 149;
const ctx = source.getContext("2d");
const img = ctx.createImageData(149, 149);

for (let y = 0; y < 149; y++) {
  for (let x = 0; x < 149; x++) {
    let v = 0;
    if (inside(x, y)) {
      const n1 = noise(x, y, 7), n2 = noise(x + 40, y + 9, 3);
      // east of the plains is dense, the mountain west is thin
      let east = (x - 30 - n1 * 26) / 24;
      east = Math.max(0, Math.min(1, east));
      const west = .02 + Math.max(0, n1 - .45) * .5 + n2 * .12 + (x < 14 && y < 60 ? .24 : 0);
      let dense = .3 + n1 * .1 + n2 * .12;
      if (y > 62 && y < 105 && x > 50) dense += .05;       // gas fields through the middle
      if (x > 100 && y < 50) dense -= .1;                  // thin north east
      if (x > 92 && y > 92) dense -= .06;                  // gulf fringe
      v = west * (1 - east) + dense * east + (rnd() - .5) * .2;
      if (rnd() < .1) v *= .55;
      if (rnd() < .012 + east * .03) v += .22;
      for (const h of hot) {
        const d = Math.hypot(x - h[0], y - h[1]);
        if (d < 2) v += (2 - d) * (.34 + rnd() * .16);
      }
      v = Math.max(0, Math.min(1, v));
    }
    const c = colour(v), o = (y * 149 + x) * 4;
    img.data[o] = c[0];
    img.data[o + 1] = c[1];
    img.data[o + 2] = c[2];
    img.data[o + 3] = 255;
  }
}
ctx.putImageData(img, 0, 0);

document.querySelectorAll(".map").forEach(c => c.getContext("2d").drawImage(source, 0, 0));
```
